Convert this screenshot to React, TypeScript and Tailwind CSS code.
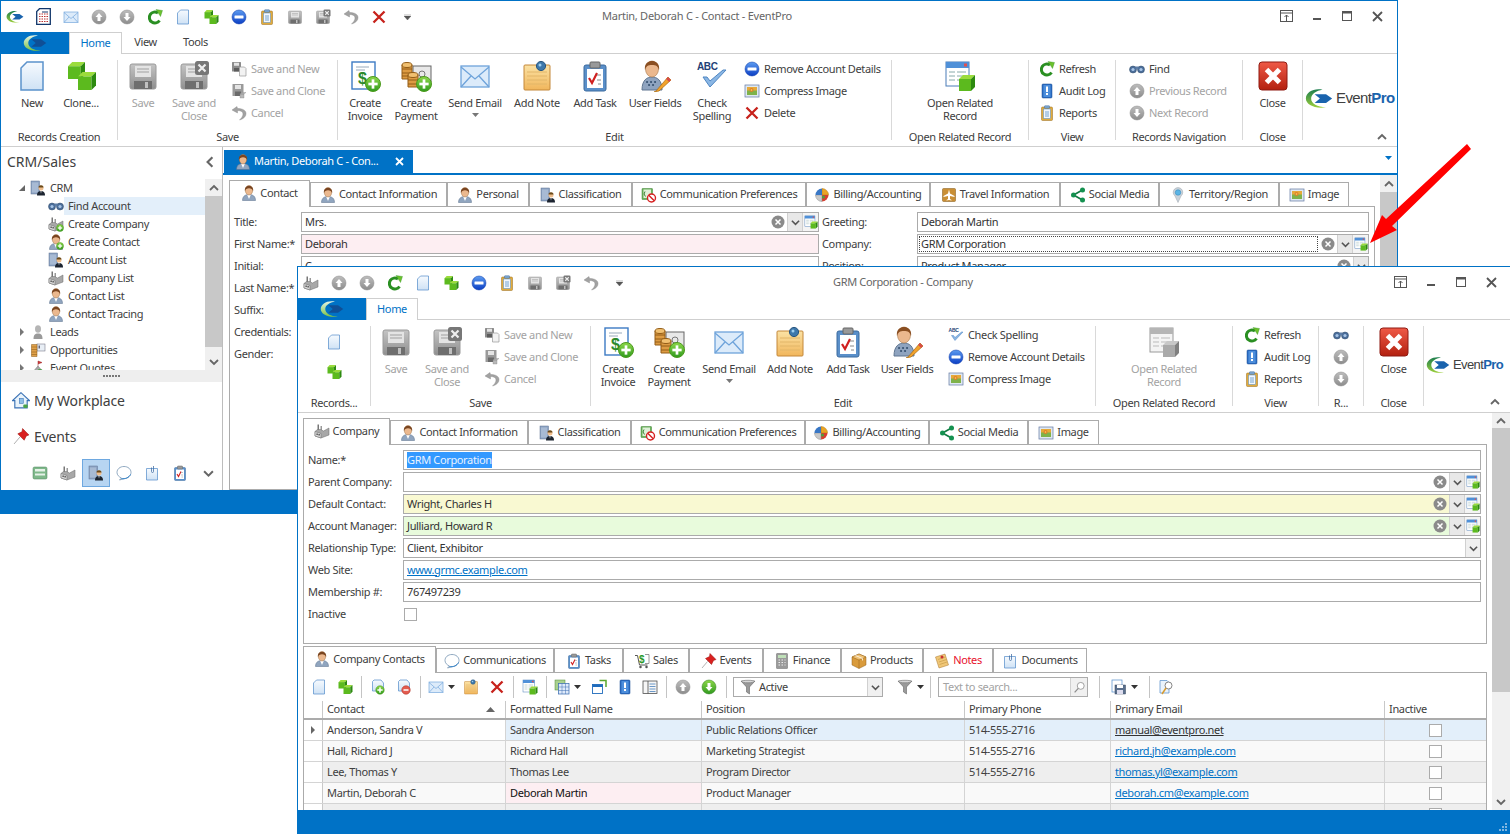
import React from "react";
import clsx from "clsx";

const cube = (x: number, y: number, s: number) => (
  <g>
    <path d={`M${x} ${y + s * 0.25}L${x + s * 0.25} ${y}H${x + s}L${x + s * 0.75} ${y + s * 0.25}Z`} fill="#9bdc3c" />
    <rect x={x} y={y + s * 0.25} width={s * 0.75} height={s * 0.75} fill="#5cba1e" />
    <path d={`M${x + s * 0.75} ${y + s * 0.25}L${x + s} ${y}V${y + s * 0.75}L${x + s * 0.75} ${y + s}Z`} fill="#2d8a10" />
  </g>
);
const plus = (cx = 23, cy = 23, r = 8) => (
  <g>
    <circle cx={cx} cy={cy} r={r} fill="url(#gGreen)" stroke="#4c9a1c" />
    <rect x={cx - r * 0.62} y={cy - r * 0.18} width={r * 1.24} height={r * 0.36} fill="#fff" />
    <rect x={cx - r * 0.18} y={cy - r * 0.62} width={r * 0.36} height={r * 1.24} fill="#fff" />
  </g>
);
const floppy = (
  <g>
    <rect x="3" y="4" width="26" height="25" rx="2" fill="url(#gFloppy)" stroke="#9a9a9a" />
    <rect x="8" y="6" width="16" height="11" fill="#e4e4e4" />
    <path d="M10 9h12M10 12h12" stroke="#a0a0a0" strokeWidth="1" />
    <rect x="7" y="21" width="18" height="8" fill="#6e6e6e" />
    <rect x="18" y="22" width="3" height="6" fill="#c0c0c0" />
  </g>
);
const person = (
  <g>
    <path d="M3 31C3 22 9 19 16 19C23 19 29 22 29 31Z" fill="#90a5bf" stroke="#566c88" />
    <path d="M12 19L16 28L20 19Z" fill="#fff" />
    <ellipse cx="16" cy="10.5" rx="7.5" ry="9.5" fill="#ebb88e" stroke="#8a5a2c" strokeWidth=".8" />
    <path d="M8 12C5 -2 27 -2 24 12C23 8 20 6.5 16 6.5C12 6.5 9 8 8 12Z" fill="#7a4520" />
  </g>
);
const factory = (
  <g>
    <rect x="7" y="3" width="3" height="11" fill="#777" />
    <rect x="13" y="6" width="3" height="8" fill="#999" />
    <path d="M2 17L7 13H13L19 16L30 10V24L14 30L2 26Z" fill="#a8a8a8" stroke="#6a6a6a" />
    <path d="M2 17L14 21V30L2 26Z" fill="#d6d6d6" stroke="#6a6a6a" />
    <rect x="5" y="21" width="2.5" height="3" fill="#444" />
    <rect x="9" y="22" width="2.5" height="3" fill="#444" />
  </g>
);
const bldg = (
  <g>
    <rect x="2" y="2" width="17" height="26" fill="#8ea5c5" stroke="#5c7191" />
    <path d="M6 5v20M10 5v20M14 5v20" stroke="#d8e2ef" strokeWidth="1.4" />
    <circle cx="22" cy="16" r="5" fill="#eebd8c" />
    <path d="M17 15C17 9 27 9 27 15Z" fill="#6a4a1a" />
    <path d="M14 31C14 24 18 22 22 22C26 22 30 24 30 31Z" fill="#1c2430" />
    <path d="M21 22L22 27L23 22Z" fill="#fff" />
  </g>
);
const docClip = (
  <g>
    <path d="M5 7H27V30H5Z" fill="url(#gDoc)" stroke="#5b92cc" strokeWidth="1.5" />
    <path d="M19 2V13Q19 15 17 15Q15 15 15 13V5" fill="none" stroke="#4470a5" strokeWidth="1.6" />
  </g>
);
const task = (
  <g>
    <rect x="5" y="5" width="22" height="26" rx="2" fill="#5a8fc9" stroke="#3a6a9e" />
    <rect x="8" y="9" width="16" height="19" fill="#fff" />
    <rect x="11" y="2" width="10" height="6" rx="1" fill="#999" stroke="#666" />
    <path d="M10 18L13 23L18 13" fill="none" stroke="#d02020" strokeWidth="2.2" />
    <path d="M18 20h4M19 24h3M18 15h4" stroke="#888" />
  </g>
);
const note = (
  <g>
    <rect x="3" y="5" width="26" height="25" rx="1" fill="url(#gNote)" stroke="#c4883a" />
    <path d="M6 12h20M6 16h20M6 20h20M6 24h20" stroke="#e2b669" />
    <circle cx="20" cy="6" r="4.6" fill="#3e78ab" stroke="#28567f" />
    <circle cx="19" cy="5" r="1.5" fill="#9fd0f0" />
  </g>
);
const clip = (
  <g>
    <rect x="5" y="4" width="22" height="27" rx="2" fill="#e0ab3c" stroke="#96691c" />
    <rect x="9" y="8" width="14" height="19" fill="#f4f7fb" stroke="#4a88c6" />
    <path d="M12 14h8M12 18h8M12 22h8" stroke="#4a88c6" strokeWidth="1.5" />
    <rect x="11" y="1.5" width="10" height="5" rx="1" fill="#7ea8d2" stroke="#446f9c" />
  </g>
);
const image = (
  <g>
    <rect x="2" y="4" width="28" height="24" fill="#dfe8f2" stroke="#6a7fa8" strokeWidth="1.5" />
    <rect x="6" y="8" width="20" height="16" fill="#7fb24a" />
    <path d="M6 8h20v7H6z" fill="#e6a93a" />
    <circle cx="15" cy="14" r="4" fill="#e07f2a" />
    <circle cx="15" cy="14" r="1.6" fill="#f7dd63" />
  </g>
);
const ball = (fill: string, st: string, inner: React.ReactNode) => (
  <g>
    <circle cx="16" cy="16" r="14" fill={fill} stroke={st} />
    {inner}
  </g>
);
const upArrow = <path d="M16 8L23 16H19V24H13V16H9Z" fill="#fff" />;
const downArrow = <path d="M16 24L23 16H19V8H13V16H9Z" fill="#fff" />;

const G: Record<string, React.ReactNode> = {
  doc: (
    <g>
      <path d="M11 2H27V30H5V8Z" fill="url(#gDoc)" stroke="#5b92cc" strokeWidth="1.5" />
    </g>
  ),
  clone: (
    <g>
      {cube(3, 2, 17)}
      {cube(13, 12, 18)}
    </g>
  ),
  minus: ball("url(#gBlue)", "#0a38a8", <rect x="7" y="13" width="18" height="6" rx="1" fill="#fff" />),
  clip,
  floppy,
  floppyX: (
    <g>
      {floppy}
      <rect x="17" y="1" width="14" height="14" rx="2.5" fill="#777" />
      <path d="M20.5 4.5L27.5 11.5M27.5 4.5L20.5 11.5" stroke="#eee" strokeWidth="2.2" />
    </g>
  ),
  saveNew: (
    <g>
      <rect x="2" y="2" width="18" height="19" rx="1" fill="#8c8c8c" />
      <rect x="6" y="3.5" width="10" height="6" fill="#e4e4e4" />
      <rect x="6" y="14" width="10" height="7" fill="#5c5c5c" />
      <path d="M17 12H27L30 15V30H17Z" fill="#f2f2f2" stroke="#9a9a9a" strokeWidth="1.4" />
    </g>
  ),
  saveClone: (
    <g>
      <rect x="3" y="2" width="22" height="24" rx="1" fill="#9a9a9a" />
      <rect x="8" y="4" width="12" height="8" fill="#e4e4e4" />
      <rect x="8" y="17" width="12" height="9" fill="#6a6a6a" />
      <path d="M18 22L22 19H30L26 22ZM18 22H26V30H18Z" fill="#b8b8b8" stroke="#888" strokeWidth=".7" />
    </g>
  ),
  undo: (
    <g>
      <path d="M12 3L2 10L13 16V11C20 11 24 14 24 18C24 23 20 27 17 30C25 28 30 23 30 17C30 10 22 7 13 7Z" fill="#a2a2a2" stroke="#7c7c7c" strokeWidth=".7" />
    </g>
  ),
  x: <path d="M5 5L27 27M27 5L5 27" stroke="#c7221c" strokeWidth="4.6" />,
  refresh: (
    <g>
      <path d="M25 23A11 11 0 1 1 22 8" fill="none" stroke="#2a8f22" strokeWidth="6" />
      <path d="M18 1L31 3L27 15Z" fill="#6cc02d" stroke="#2a8f22" strokeWidth=".7" />
    </g>
  ),
  mail: (
    <g>
      <rect x="2" y="6" width="28" height="21" fill="#dcebfa" stroke="#6ea3da" strokeWidth="1.3" />
      <path d="M2 7L16 19L30 7M2 27L12 16M30 27L20 16" fill="none" stroke="#6ea3da" strokeWidth="1.3" />
    </g>
  ),
  grayUp: ball("url(#gGray)", "#8a8a8a", upArrow),
  grayDown: ball("url(#gGray)", "#8a8a8a", downArrow),
  greenDown: ball("url(#gGreen)", "#2d7a18", downArrow),
  person,
  factory,
  bldg,
  note,
  task,
  user: (
    <g>
      <path d="M3 30C3 20 8 17 13 17C18 17 23 20 23 30Z" fill="#8ea3bf" stroke="#5f7590" />
      <ellipse cx="13" cy="9" rx="6.5" ry="8" fill="#ebb88e" stroke="#a87748" strokeWidth=".6" />
      <path d="M6 10C4 -2 22 -2 20 10C19 6 17 5 13 5C9 5 7 6 6 10Z" fill="#8a4f22" />
      <path d="M8 22h.1M12 22h.1M16 22h.1M10 25h.1M14 25h.1" stroke="#36506f" strokeWidth="2" strokeLinecap="round" />
      <path d="M17 31L29 17L32 20L20 31L15 32Z" fill="#f2a22c" stroke="#a96a10" strokeWidth=".7" />
      <path d="M28 18L31 21" stroke="#d84a4a" strokeWidth="2.5" />
    </g>
  ),
  check: (
    <g>
      <text x="1" y="10" fontSize="10" fontWeight="700" fill="#1f3f77" fontFamily="Liberation Sans, sans-serif">ABC</text>
      <path d="M7 17L14 27L30 10L27 10L14 21L11 17Z" fill="#8ab6e4" stroke="#4f86c2" />
    </g>
  ),
  image,
  invoice: (
    <g>
      <rect x="3" y="2" width="23" height="27" fill="#fff" stroke="#3d7bc4" strokeWidth="1.4" />
      <path d="M7 7h13M7 10h9" stroke="#9ab" />
      <text x="9" y="24" fontSize="16" fontWeight="700" fill="#2b8a2b" fontFamily="Liberation Sans, sans-serif">$</text>
      {plus(24, 24, 7.5)}
    </g>
  ),
  payment: (
    <g>
      <rect x="13" y="6" width="18" height="16" fill="#e8e8e8" stroke="#666" />
      <circle cx="22" cy="14" r="3" fill="none" stroke="#777" />
      <path d="M2 5h10v14H2z" fill="#dd9b42" stroke="#935c16" />
      <ellipse cx="7" cy="5" rx="5" ry="2.5" fill="#f1c070" stroke="#935c16" />
      <path d="M2 9h10M2 13h10M2 16h10" stroke="#935c16" />
      <path d="M8 15h10v12H8z" fill="#dd9b42" stroke="#935c16" />
      <ellipse cx="13" cy="15" rx="5" ry="2.5" fill="#f1c070" stroke="#935c16" />
      <path d="M8 20h10M8 24h10" stroke="#935c16" />
      {plus(24, 24, 7.5)}
    </g>
  ),
  related: (
    <g>
      <rect x="2" y="2" width="23" height="24" fill="#fff" stroke="#4a7cb8" />
      <rect x="2" y="2" width="23" height="6" fill="#4f90d8" />
      <rect x="20" y="3.5" width="3" height="3" fill="#e05050" />
      <path d="M5 12h6M13 12h9M5 16h6M13 16h9M5 20h6M13 20h6" stroke="#8aa" />
      {cube(15, 15, 16)}
    </g>
  ),
  relatedGray: (
    <g>
      <rect x="2" y="2" width="23" height="24" fill="#f4f4f4" stroke="#9a9a9a" />
      <rect x="2" y="2" width="23" height="6" fill="#b5b5b5" />
      <path d="M5 12h6M13 12h9M5 16h6M13 16h9M5 20h6M13 20h6" stroke="#bbb" />
      <path d="M15 19L19 15H31L27 19Z" fill="#c8c8c8" />
      <rect x="15" y="19" width="12" height="12" fill="#aaa" />
      <path d="M27 19L31 15V27L27 31Z" fill="#808080" />
    </g>
  ),
  audit: (
    <g>
      <rect x="6" y="2" width="20" height="28" rx="2" fill="#2c6ec4" stroke="#174a90" />
      <rect x="9" y="4" width="14" height="24" rx="1" fill="#4d8edb" />
      <rect x="14" y="7" width="4" height="11" fill="#fff" />
      <rect x="14" y="20" width="4" height="4" fill="#fff" />
    </g>
  ),
  bino: (
    <g>
      <circle cx="8" cy="17" r="7" fill="#4a6d9a" stroke="#2f4866" />
      <circle cx="24" cy="17" r="7" fill="#4a6d9a" stroke="#2f4866" />
      <circle cx="8" cy="17" r="3.2" fill="#a8c5e6" />
      <circle cx="24" cy="17" r="3.2" fill="#a8c5e6" />
      <rect x="13" y="11" width="6" height="5" fill="#5d7ea8" />
    </g>
  ),
  closeBig: (
    <g>
      <rect x="2" y="2" width="28" height="28" rx="3" fill="url(#gRed)" stroke="#8f1b12" />
      <path d="M9.5 9.5L22.5 22.5M22.5 9.5L9.5 22.5" stroke="#fff" strokeWidth="5" />
    </g>
  ),
  comm: (
    <g>
      <rect x="2" y="3" width="21" height="22" rx="1" fill="#69b35a" stroke="#3e7f35" />
      <rect x="5" y="5" width="15" height="17" fill="#dff0d8" />
      <path d="M8 9L6 14L9 19" fill="none" stroke="#3e7f35" strokeWidth="2" />
      <circle cx="21" cy="22" r="8" fill="#fff" stroke="#d62020" strokeWidth="2.8" />
      <path d="M15.5 16.5L26.5 27.5" stroke="#d62020" strokeWidth="2.8" />
    </g>
  ),
  billing: (
    <g>
      <path d="M16 3A13 13 0 0 1 29 16L16 16Z" fill="#e9a425" stroke="#b77a12" />
      <path d="M29 16A13 13 0 0 1 16 29L16 16Z" fill="#d63f2f" />
      <path d="M16 29A13 13 0 0 1 3 16L16 16Z" fill="#c9c9c9" stroke="#888" />
      <path d="M3 16A13 13 0 0 1 16 3L16 16Z" fill="#3977c5" />
      <circle cx="19" cy="20" r="3" fill="#4da13a" />
    </g>
  ),
  travel: (
    <g>
      <rect x="3" y="3" width="26" height="26" rx="2" fill="#c98f35" stroke="#805515" />
      <path d="M16 5L18 13L27 18V20L18 18V24L21 26V27L16 26L11 27V26L14 24V18L5 20V18L14 13Z" fill="#fff" />
    </g>
  ),
  share: (
    <g>
      <path d="M25 6L7 16L25 26" fill="none" stroke="#137a43" strokeWidth="3.4" />
      <circle cx="25" cy="6" r="5" fill="#159150" />
      <circle cx="7" cy="16" r="5" fill="#159150" />
      <circle cx="25" cy="26" r="5" fill="#159150" />
    </g>
  ),
  pinMap: (
    <g>
      <path d="M16 31L10 18A9.5 9.5 0 1 1 22 18Z" fill="#c9d2da" stroke="#9aa3ab" />
      <circle cx="16" cy="11" r="5.5" fill="#5ab4e5" stroke="#2f85b9" />
    </g>
  ),
  home: (
    <g>
      <path d="M16 3L1 17H5V30H27V17H31Z" fill="#e9f3fb" stroke="#3a72b5" strokeWidth="2" />
      <rect x="13" y="13" width="7" height="9" fill="#8fbfe8" stroke="#3a72b5" />
      <rect x="20" y="24" width="8" height="6" rx="2" fill="#4aa24a" />
    </g>
  ),
  pushpin: (
    <g>
      <path d="M2 30L13 17" stroke="#9a9a9a" strokeWidth="1.5" />
      <path d="M18 1L30 13L25 15L21 23L9 11L17 7Z" fill="#d9201f" stroke="#971310" />
    </g>
  ),
  cash: (
    <g>
      <rect x="2" y="4" width="28" height="24" rx="3" fill="#7fb88a" stroke="#4a8358" />
      <rect x="6" y="8" width="20" height="5" fill="#e6f2e8" />
      <rect x="6" y="17" width="20" height="4" fill="#e6f2e8" />
    </g>
  ),
  bubble: (
    <g>
      <path d="M16 3C8 3 2 8 2 15C2 20 6 24 11 26L7 30L17 27C24 27 30 21 30 15C30 8 24 3 16 3Z" fill="#fff" stroke="#6f8fae" strokeWidth="1.5" />
      <path d="M11 27C18 29 26 25 29 19" fill="none" stroke="#2d7fc8" strokeWidth="2" />
    </g>
  ),
  docClip,
  calc: (
    <g>
      <rect x="5" y="1" width="22" height="30" rx="1" fill="#9a9a9a" stroke="#6a6a6a" />
      <rect x="8" y="4" width="16" height="6" fill="#bfe0b8" />
      <path d="M9 14h3M15 14h3M21 14h2M9 19h3M15 19h3M21 19h2M9 24h3M15 24h3M21 24h2" stroke="#eee" strokeWidth="2.4" />
    </g>
  ),
  box: (
    <g>
      <path d="M16 2L30 8V24L16 31L2 24V8Z" fill="#d99b3c" stroke="#94621a" />
      <path d="M2 8L16 14L30 8L16 2Z" fill="#f0c377" stroke="#94621a" />
      <path d="M16 14V31" stroke="#94621a" />
      <path d="M9 5L23 11V15" fill="none" stroke="#fff" strokeWidth="1.5" />
    </g>
  ),
  noteTan: (
    <g>
      <path d="M3 8L22 2L29 24L10 30Z" fill="#f0c777" stroke="#a9752a" />
      <path d="M8 13L23 8M10 18L25 13M11 23L26 18" stroke="#b98a3a" />
      <circle cx="16" cy="8" r="3" fill="#c93232" />
    </g>
  ),
  cart: (
    <g>
      <path d="M2 5H7L11 24H27" fill="none" stroke="#555" strokeWidth="2" />
      <circle cx="13" cy="28" r="2.5" fill="#555" />
      <circle cx="25" cy="28" r="2.5" fill="#555" />
      <text x="10" y="19" fontSize="20" fontWeight="700" fill="#2a9a2a" fontFamily="Liberation Sans, sans-serif">$</text>
      <path d="M22 3h8v18h-8" fill="none" stroke="#777" strokeWidth="1.5" />
    </g>
  ),
  funnel: (
    <g>
      <path d="M2 4H30L19 16V30L13 26V16Z" fill="#9a9a9a" stroke="#555" />
      <ellipse cx="16" cy="5" rx="13" ry="2.5" fill="#d8d8d8" stroke="#666" />
    </g>
  ),
  glass: (
    <g>
      <circle cx="19" cy="12" r="8.5" fill="#fff" stroke="#8c8c8c" strokeWidth="2" />
      <path d="M13 18L4 28" stroke="#8c8c8c" strokeWidth="3" />
    </g>
  ),
  addDoc: (
    <g>
      <path d="M8 2H22L27 8V24H5V5Z" fill="url(#gDoc)" stroke="#5b92cc" strokeWidth="1.5" />
      {plus(20, 22, 8.5)}
    </g>
  ),
  remDoc: (
    <g>
      <path d="M8 2H22L27 8V24H5V5Z" fill="url(#gDoc)" stroke="#5b92cc" strokeWidth="1.5" />
      <circle cx="20" cy="22" r="8.5" fill="#e35c50" stroke="#a8261a" />
      <rect x="15" y="20.5" width="10" height="3" fill="#fff" />
    </g>
  ),
  gridSel: (
    <g>
      <rect x="2" y="2" width="20" height="20" fill="#a9d18e" stroke="#4f8a35" />
      <rect x="9" y="9" width="21" height="21" fill="#dfeafa" stroke="#3c6eb2" strokeWidth="1.5" />
      <path d="M9 16h21M9 23h21M16 9v21M23 9v21" stroke="#3c6eb2" />
    </g>
  ),
  windows: (
    <g>
      <rect x="3" y="11" width="20" height="18" fill="#fff" stroke="#1f6cbc" strokeWidth="1.8" />
      <rect x="3" y="11" width="20" height="5" fill="#1f6cbc" />
      <path d="M17 3H30V16" fill="none" stroke="#5aa82e" strokeWidth="3" />
    </g>
  ),
  layout: (
    <g>
      <rect x="2" y="4" width="28" height="25" fill="#f6f6f6" stroke="#444" strokeWidth="1.5" />
      <path d="M12 4V29" stroke="#444" strokeWidth="1.5" />
      <path d="M15 10h12M15 15h12M15 20h12M15 25h12" stroke="#3c78b8" strokeWidth="1.5" />
    </g>
  ),
  saveLayout: (
    <g>
      <rect x="2" y="2" width="20" height="24" fill="#fff" stroke="#5b92cc" strokeWidth="1.5" />
      <rect x="8" y="12" width="21" height="18" fill="#5a6f8c" stroke="#35465e" />
      <rect x="12" y="12" width="12" height="6" fill="#fff" />
      <rect x="12" y="22" width="12" height="8" fill="#dde" />
    </g>
  ),
  docSearch: (
    <g>
      <path d="M4 3H18L22 7V28H4Z" fill="#eaf3fb" stroke="#5b92cc" strokeWidth="1.5" />
      <circle cx="21" cy="13" r="7" fill="#fff" stroke="#777" strokeWidth="1.8" />
      <path d="M16 18L8 30" stroke="#d89b2e" strokeWidth="3" />
    </g>
  ),
  addCo: (
    <g>
      {factory}
      {plus(24, 24, 7)}
    </g>
  ),
  addPerson: (
    <g>
      {person}
      {plus(24, 24, 7)}
    </g>
  ),
  lead: (
    <g>
      <path d="M7 30C7 22 10 19 16 19C22 19 25 22 25 30Z" fill="#9a9a9a" />
      <ellipse cx="16" cy="10" rx="6" ry="7.5" fill="#b5b5b5" />
    </g>
  ),
  opp: (
    <g>
      <rect x="14" y="4" width="16" height="14" fill="#e8eef5" stroke="#667" />
      <rect x="17" y="7" width="3" height="6" fill="#667" />
      <path d="M3 5h11v24H3z" fill="#e0a14a" stroke="#8a5a16" />
      <path d="M3 10h11M3 15h11M3 20h11M3 25h11" stroke="#8a5a16" />
    </g>
  ),
  quote: (
    <g>
      <path d="M4 26L16 12L28 26Z" fill="#a8a8a8" stroke="#666" />
      <path d="M16 12V2L24 5L16 8" fill="#d13b3b" stroke="#922" />
      <circle cx="20" cy="24" r="6" fill="#4aa24a" />
    </g>
  ),
};

function Ic({ n, s = 16 }: { n: string; s?: number }) {
  return (
    <svg width={s} height={s} viewBox="0 0 32 32" className="shrink-0">
      {G[n]}
    </svg>
  );
}

function Logo({ w, onBlue }: { w: number; onBlue?: boolean }) {
  return (
    <svg width={w} height={(w * 24) / 32} viewBox="0 0 32 24" className="shrink-0">
      <path d="M20 2C10 0 1 5 1 12C1 19 11 24 24 22C14 22 7 18 7 12C7 7 13 3 20 2Z" fill={onBlue ? "url(#gLogoB)" : "url(#gLogo)"} />
      <path d="M11 7H24L31 12L24 17H11L17 12Z" fill={onBlue ? "#0f4f96" : "#1a63ad"} />
    </svg>
  );
}

function Chev({ d, c = "#666", s = 10, w = 1.8 }: { d: "u" | "d" | "l" | "r"; c?: string; s?: number; w?: number }) {
  const p = { u: "M1 7L5 3L9 7", d: "M1 3L5 7L9 3", l: "M7 1L3 5L7 9", r: "M3 1L7 5L3 9" }[d];
  return (
    <svg width={s} height={s} viewBox="0 0 10 10" className="shrink-0">
      <path d={p} fill="none" stroke={c} strokeWidth={w} />
    </svg>
  );
}
const Caret = ({ c = "#404040" }: { c?: string }) => (
  <svg width="7" height="4" viewBox="0 0 7 4" className="shrink-0">
    <path d="M0 0H7L3.5 4Z" fill={c} />
  </svg>
);

function Large({ w, n, label, off, caret }: { w: string; n: string; label: React.ReactNode; off?: boolean; caret?: boolean }) {
  return (
    <div className={clsx("flex flex-col items-center shrink-0", w, off ? "text-[#a3a3a3]" : "text-[#404040]")}>
      <Ic n={n} s={32} />
      <div className="mt-[4px] text-center leading-[13px] whitespace-nowrap">{label}</div>
      {caret && (
        <div className="mt-[4px]">
          <Caret c="#777" />
        </div>
      )}
    </div>
  );
}
function Small({ n, label, off }: { n: string; label?: string; off?: boolean }) {
  return (
    <div className={clsx("flex items-center gap-[4px] h-[22px] whitespace-nowrap", off ? "text-[#a3a3a3]" : "text-[#404040]")}>
      <Ic n={n} s={16} />
      {label && <span>{label}</span>}
    </div>
  );
}
function Col({ className, children }: { className: string; children: React.ReactNode }) {
  return <div className={clsx("flex flex-col -mt-[2px] shrink-0", className)}>{children}</div>;
}
function Group({ w, label, children, end }: { w: string; label: string; children: React.ReactNode; end?: boolean }) {
  return (
    <div className={clsx("flex flex-col h-[80px] shrink-0", w, !end && "border-r border-[#d9d9d9]")}>
      <div className="flex h-[70px] shrink-0">{children}</div>
      <div className="h-[14px] leading-[14px] text-center text-[#404040] whitespace-nowrap shrink-0">{label}</div>
    </div>
  );
}

function Controls({ cls }: { cls: string }) {
  const Cell = ({ children }: { children: React.ReactNode }) => <div className="w-[30px] flex justify-center items-center">{children}</div>;
  return (
    <div className={clsx("ml-auto flex items-center", cls)}>
      <Cell>
        <svg width="14" height="13" viewBox="0 0 14 13">
          <rect x=".5" y=".5" width="12" height="11" fill="none" stroke="#555" />
          <path d="M.5 3H12.5" stroke="#555" />
          <path d="M6.5 11V5M4.5 7L6.5 5L8.5 7" fill="none" stroke="#555" />
        </svg>
      </Cell>
      <Cell>
        <svg width="10" height="10" viewBox="0 0 10 10">
          <rect x="1" y="6" width="8" height="2" fill="#555" />
        </svg>
      </Cell>
      <Cell>
        <svg width="11" height="11" viewBox="0 0 11 11">
          <rect x=".5" y=".5" width="9" height="9" fill="none" stroke="#555" />
          <rect x="0" y="0" width="10" height="2.5" fill="#555" />
        </svg>
      </Cell>
      <Cell>
        <svg width="11" height="11" viewBox="0 0 11 11">
          <path d="M1 1L10 10M10 1L1 10" stroke="#555" strokeWidth="1.8" />
        </svg>
      </Cell>
    </div>
  );
}

function Qat({ items, ml }: { items: React.ReactNode[]; ml?: string }) {
  return (
    <div className={clsx("flex items-center", ml)}>
      {items.map((it, i) => (
        <div key={i} className="w-[28px] flex justify-center items-center">
          {it}
        </div>
      ))}
    </div>
  );
}

function Tab({ n, label, active, w, red }: { n: string; label: string; active?: boolean; w: string; red?: boolean }) {
  return (
    <div
      className={clsx(
        "flex items-center justify-center gap-[3px] border border-b-0 border-[#ababab] bg-white whitespace-nowrap shrink-0",
        w,
        active ? "h-[27px] -mb-px relative z-10 pb-[2px]" : "h-[24px]",
        red ? "text-[#e8112d]" : "text-[#404040]"
      )}
    >
      <Ic n={n} s={16} />
      <span>{label}</span>
    </div>
  );
}

function Clear() {
  return (
    <svg width="14" height="14" viewBox="0 0 14 14" className="shrink-0">
      <circle cx="7" cy="7" r="6.5" fill="#8a8a8a" />
      <path d="M4.5 4.5L9.5 9.5M9.5 4.5L4.5 9.5" stroke="#fff" strokeWidth="1.5" />
    </svg>
  );
}
function Look() {
  return (
    <svg width="14" height="14" viewBox="0 0 32 32" className="shrink-0">
      {G.related}
    </svg>
  );
}
function Field({ v, bg, combo, drop, dotted, w, sel, link, noLook }: { v?: string; bg?: string; combo?: boolean; drop?: boolean; dotted?: boolean; w?: string; sel?: boolean; link?: boolean; noLook?: boolean }) {
  return (
    <div className={clsx("h-[20px] border border-[#ababab] flex items-center shrink-0", bg ?? "bg-white", w ?? "flex-1")}>
      <div className={clsx("flex-1 min-w-0 h-full flex items-center pl-[3px] overflow-hidden whitespace-nowrap text-[#333]", dotted && "outline outline-1 outline-dotted outline-[#444] -outline-offset-[2px]")}>
        {sel ? <span className="bg-[#3399ff] text-[#e8f2ff]">{v}</span> : link ? <span className="text-[#0072c6] underline">{v}</span> : v}
      </div>
      {combo && (
        <>
          <div className="ml-[2px] mr-[2px]">
            <Clear />
          </div>
          <div className="w-[15px] h-full bg-[#e8e8e8] border-l border-[#d0d0d0] flex items-center justify-center">
            <Chev d="d" s={9} c="#555" />
          </div>
          {!noLook && (
            <div className="w-[16px] h-full flex items-center justify-center border-l border-[#d0d0d0] bg-[#f4f4f4]">
              <Look />
            </div>
          )}
        </>
      )}
      {drop && (
        <div className="w-[15px] h-full bg-[#f0f0f0] border-l border-[#d0d0d0] flex items-center justify-center">
          <Chev d="d" s={9} c="#555" />
        </div>
      )}
    </div>
  );
}

function Scroll({ className, up, thumb, rest, down }: { className?: string; up: string; thumb: string; rest: string; down?: boolean }) {
  return (
    <div className={clsx("flex flex-col shrink-0 bg-[#f0f0f0]", className)}>
      <div className={clsx("flex items-center justify-center shrink-0", up)}>
        <Chev d="u" />
      </div>
      <div className={clsx("bg-[#c8c8c8] shrink-0", thumb)} />
      <div className={clsx("flex items-end justify-center shrink-0", rest)}>
        {down && (
          <div className="pb-[3px]">
            <Chev d="d" />
          </div>
        )}
      </div>
    </div>
  );
}

function Sep({ c }: { c: string }) {
  return <div className={clsx("w-px h-[22px] bg-[#c4c4c4] shrink-0", c)} />;
}
function TB({ w, n, caret, s = 16 }: { w: string; n: string; caret?: boolean; s?: number }) {
  return (
    <div className={clsx("flex items-center justify-center gap-[4px] shrink-0", w)}>
      <Ic n={n} s={s} />
      {caret && <Caret c="#333" />}
    </div>
  );
}

const gridCols = ["w-[19px]", "w-[183px]", "w-[196px]", "w-[263px]", "w-[146px]", "w-[274px]", "flex-1"];
const people = [
  { c: "Anderson, Sandra V", f: "Sandra Anderson", p: "Public Relations Officer", ph: "514-555-2716", e: "manual@eventpro.net", bg: "bg-[#e3effa]" },
  { c: "Hall, Richard J", f: "Richard Hall", p: "Marketing Strategist", ph: "514-555-2716", e: "richard.jh@example.com", bg: "bg-[#f9f9f9]" },
  { c: "Lee, Thomas Y", f: "Thomas Lee", p: "Program Director", ph: "514-555-2716", e: "thomas.yl@example.com", bg: "bg-[#eeeeee]" },
  { c: "Martin, Deborah C", f: "Deborah Martin", p: "Product Manager", ph: "", e: "deborah.cm@example.com", bg: "bg-[#f9f9f9]" },
  { c: "Nolan, Peter K", f: "Peter Nolan", p: "Sales Lead", ph: "", e: "peter.kn@example.com", bg: "bg-[#eeeeee]" },
];

function Defs() {
  const g = (id: string, a: string, b: string) => (
    <linearGradient id={id} x1="0" y1="0" x2="0" y2="1">
      <stop offset="0" stopColor={a} />
      <stop offset="1" stopColor={b} />
    </linearGradient>
  );
  return (
    <svg width="0" height="0" className="absolute">
      <defs>
        {g("gDoc", "#f6fafe", "#cfe2f5")}
        {g("gBlue", "#5d9cf0", "#0b3ec4")}
        {g("gGreen", "#8ed84a", "#2f9a1e")}
        {g("gGray", "#bdbdbd", "#8c8c8c")}
        {g("gRed", "#ef5a47", "#b3200f")}
        {g("gNote", "#fbe2a4", "#f1b65c")}
        {g("gFloppy", "#c4c4c4", "#8f8f8f")}
        {g("gLogo", "#1c7d4e", "#9ccf3c")}
        {g("gLogoB", "#e6f4e6", "#7ac143")}
      </defs>
    </svg>
  );
}

const Two = ({ a, b }: { a: string; b: string }) => (
  <>
    {a}
    <br />
    {b}
  </>
);

function BrandLogo({ cls, lw, text, gap }: { cls: string; lw: number; text: string; gap: string }) {
  return (
    <div className={clsx("flex items-center shrink-0 font-['Liberation_Sans',sans-serif]", cls, gap)}>
      <Logo w={lw} />
      <span className={clsx("tracking-[-0.6px] text-[#404040] whitespace-nowrap", text)}>
        Event<span className="text-[#1a63ad] font-bold">Pro</span>
      </span>
    </div>
  );
}

function Ribbon({ tree }: { tree: React.ReactNode }) {
  return <div className="flex h-[93px] pt-[6px] border-b border-[#cfcfcf] shrink-0 relative">{tree}</div>;
}

function Window1() {
  const labels: [string, string?][] = [["Title:"], ["First Name:", "*"], ["Initial:"], ["Last Name:", "*"], ["Suffix:"], ["Credentials:"], ["Gender:"]];
  const right = [
    <Field key="a" v="Deborah Martin" />,
    <Field key="b" v="GRM Corporation" combo dotted />,
    <Field key="c" v="Product Manager" combo noLook />,
  ];
  const left = [<Field key="a" v="Mrs." combo />, <Field key="b" v="Deborah" bg="bg-[#fdeef2]" />, <Field key="c" v="C" />, <Field key="d" v="Martin" bg="bg-[#fdeef2]" />, <Field key="e" />, <Field key="f" />, <Field key="g" />];
  return (
    <div className="absolute left-0 top-0 w-[1398px] h-[514px] bg-white border border-b-0 border-[#0072c6] flex flex-col overflow-hidden">
      <div className="flex items-center h-[31px] shrink-0">
        <Qat
          items={[
            <Logo w={18} key="1" />,
            <svg key="2" width="15" height="17" viewBox="0 0 15 17">
              <path d="M3.5 .7H14.3V16.3H.7V3.5Z" fill="#fff" stroke="#12376b" strokeWidth="1.3" />
              <path d="M3 6h9M3 8.5h9M3 11h9M3 13.5h9" stroke="#b33" strokeDasharray="1.5 1" />
              <path d="M6 4h6" stroke="#12376b" />
            </svg>,
            <Ic n="mail" key="3" />,
            <Ic n="grayUp" key="4" />,
            <Ic n="grayDown" key="5" />,
            <Ic n="refresh" key="6" />,
            <Ic n="doc" key="7" />,
            <Ic n="clone" key="8" />,
            <Ic n="minus" key="9" />,
            <Ic n="clip" key="10" />,
            <Ic n="floppy" key="11" />,
            <Ic n="floppyX" key="12" />,
            <Ic n="undo" key="13" />,
            <Ic n="x" key="14" />,
            <svg key="15" width="7" height="6" viewBox="0 0 7 6">
              <path d="M0 0H7M0 2H7L3.5 6Z" fill="#555" stroke="#555" strokeWidth=".4" />
            </svg>,
          ]}
        />
        <div className="ml-[181px] text-[#666] whitespace-nowrap tracking-[-0.25px]">Martin, Deborah C - Contact - EventPro</div>
        <Controls cls="pr-[5px]" />
      </div>
      <div className="flex h-[22px] shrink-0 border-b border-[#cfcfcf]">
        <div className="w-[68px] h-[22px] bg-[#0072c6] flex items-center justify-center shrink-0">
          <Logo w={24} onBlue />
        </div>
        <div className="w-[53px] h-[22px] bg-white border border-b-0 border-[#cfcfcf] text-[#0072c6] flex items-center justify-center">Home</div>
        <div className="w-[47px] flex items-center justify-center text-[#404040]">View</div>
        <div className="w-[53px] flex items-center justify-center text-[#404040]">Tools</div>
      </div>
      <Ribbon
        tree={
          <>
            <Group w="w-[117px]" label="Records Creation">
              <Large w="w-[50px] ml-[6px]" n="doc" label="New" />
              <Large w="w-[48px]" n="clone" label="Clone..." />
            </Group>
            <Group w="w-[220px]" label="Save">
              <Large w="w-[50px]" n="floppy" label="Save" off />
              <Large w="w-[52px]" n="floppyX" label={<Two a="Save and" b="Close" />} off />
              <Col className="ml-[11px]">
                <Small n="saveNew" label="Save and New" off />
                <Small n="saveClone" label="Save and Clone" off />
                <Small n="undo" label="Cancel" off />
              </Col>
            </Group>
            <Group w="w-[554px]" label="Edit">
              <Large w="w-[54px]" n="invoice" label={<Two a="Create" b="Invoice" />} />
              <Large w="w-[48px]" n="payment" label={<Two a="Create" b="Payment" />} />
              <Large w="w-[70px]" n="mail" label="Send Email" caret />
              <Large w="w-[54px]" n="note" label="Add Note" />
              <Large w="w-[62px]" n="task" label="Add Task" />
              <Large w="w-[58px]" n="user" label="User Fields" />
              <Large w="w-[56px]" n="check" label={<Two a="Check" b="Spelling" />} />
              <Col className="ml-[4px]">
                <Small n="minus" label="Remove Account Details" />
                <Small n="image" label="Compress Image" />
                <Small n="x" label="Delete" />
              </Col>
            </Group>
            <Group w="w-[137px]" label="Open Related Record">
              <Large w="w-full" n="related" label={<Two a="Open Related" b="Record" />} />
            </Group>
            <Group w="w-[87px]" label="View">
              <Col className="ml-[10px]">
                <Small n="refresh" label="Refresh" />
                <Small n="audit" label="Audit Log" />
                <Small n="clip" label="Reports" />
              </Col>
            </Group>
            <Group w="w-[127px]" label="Records Navigation">
              <Col className="ml-[13px]">
                <Small n="bino" label="Find" />
                <Small n="grayUp" label="Previous Record" off />
                <Small n="grayDown" label="Next Record" off />
              </Col>
            </Group>
            <Group w="w-[60px]" label="Close">
              <Large w="w-full" n="closeBig" label="Close" />
            </Group>
            <div className="flex flex-col flex-1 items-start">
              <BrandLogo cls="mt-[27px] ml-[2px]" lw={28} text="text-[15px]" gap="gap-[3px]" />
              <div className="mt-[22px] ml-[74px]">
                <Chev d="u" s={10} />
              </div>
            </div>
          </>
        }
      />
      <div className="flex flex-1 min-h-0">
        <div className="w-[222px] border-r border-[#bdbdbd] flex flex-col shrink-0">
          <div className="h-[32px] flex items-center justify-between pl-[6px] pr-[6px] pb-[3px] text-[14px] text-[#404040] shrink-0 tracking-normal">
            <span>CRM/Sales</span>
            <Chev d="l" s={12} c="#666" w={1.8} />
          </div>
          <div className="flex h-[191px] shrink-0 overflow-hidden">
            <div className="flex-1 text-[#404040]">
              <div className="h-[18px] flex items-center pl-[17px] gap-[4px]">
                <svg width="8" height="8" viewBox="0 0 8 8" className="shrink-0">
                  <path d="M7 1V7H1Z" fill="#666" />
                </svg>
                <Ic n="bldg" s={16} />
                <span>CRM</span>
              </div>
              {[
                ["bino", "Find Account"],
                ["addCo", "Create Company"],
                ["addPerson", "Create Contact"],
                ["bldg", "Account List"],
                ["factory", "Company List"],
                ["person", "Contact List"],
                ["person", "Contact Tracing"],
              ].map(([n, l], i) => (
                <div key={l} className="h-[18px] flex items-center pl-[47px]">
                  <Ic n={n} s={16} />
                  <span className={clsx("flex-1 h-full flex items-center pl-[4px]", i === 0 && "bg-[#e3effa]")}>{l}</span>
                </div>
              ))}
              {[
                ["lead", "Leads"],
                ["opp", "Opportunities"],
                ["quote", "Event Quotes"],
              ].map(([n, l]) => (
                <div key={l} className="h-[18px] flex items-center pl-[17px] gap-[4px]">
                  <svg width="8" height="8" viewBox="0 0 8 8" className="shrink-0">
                    <path d="M2 0L6 4L2 8Z" fill="#777" />
                  </svg>
                  <Ic n={n} s={16} />
                  <span>{l}</span>
                </div>
              ))}
            </div>
            <Scroll className="w-[17px]" up="h-[17px]" thumb="h-[151px]" rest="h-[23px]" down />
          </div>
          <div className="h-[12px] bg-[#eeeeee] flex items-center justify-center shrink-0">
            <span className="flex gap-[1px]">
              {[0, 1, 2, 3, 4, 5].map((i) => (
                <span key={i} className="w-[2px] h-[2px] bg-[#777]" />
              ))}
            </span>
          </div>
          <div className="h-[36px] flex items-center pl-[11px] gap-[4px] text-[14px] text-[#404040] shrink-0 tracking-[-0.15px]">
            <Ic n="home" s={18} />
            <span>My Workplace</span>
          </div>
          <div className="h-[36px] flex items-center pl-[12px] gap-[4px] text-[14px] text-[#404040] shrink-0 tracking-[-0.15px]">
            <Ic n="pushpin" s={17} />
            <span>Events</span>
          </div>
          <div className="flex pl-[25px] pt-[5px]">
            {["cash", "factory", "bldg", "bubble", "docClip", "task"].map((n, i) => (
              <div key={n} className={clsx("w-[28px] h-[28px] flex items-center justify-center shrink-0", i === 2 && "bg-[#b7d5f2] border border-[#6ea8e0]")}>
                <Ic n={n} s={16} />
              </div>
            ))}
            <div className="w-[28px] h-[28px] flex items-center justify-center">
              <Chev d="d" s={11} />
            </div>
          </div>
        </div>
        <div className="flex-1 flex flex-col min-w-0">
          <div className="h-[28px] pt-[3px] border-b-2 border-[#0072c6] flex justify-between shrink-0">
            <div className="w-[189px] h-[23px] ml-px bg-[#0072c6] text-white flex items-center pl-[11px] gap-[3px] whitespace-nowrap">
              <Ic n="person" s={16} />
              <span className="flex-1">Martin, Deborah C - Con...</span>
              <svg width="9" height="9" viewBox="0 0 9 9" className="mr-[9px]">
                <path d="M1 1L8 8M8 1L1 8" stroke="#fff" strokeWidth="1.8" />
              </svg>
            </div>
            <div className="pr-[5px] pt-[6px]">
              <Caret c="#0072c6" />
            </div>
          </div>
          <div className="flex flex-1 min-h-0">
            <div className="flex-1 flex flex-col pl-[6px] pr-[5px] pt-[5px] min-w-0">
              <div className="flex items-end h-[26px] shrink-0">
                <Tab n="person" label="Contact" active w="w-[81px]" />
                <Tab n="person" label="Contact Information" w="w-[137px]" />
                <Tab n="person" label="Personal" w="w-[82px]" />
                <Tab n="bldg" label="Classification" w="w-[103px]" />
                <Tab n="comm" label="Communication Preferences" w="w-[174px]" />
                <Tab n="billing" label="Billing/Accounting" w="w-[124px]" />
                <Tab n="travel" label="Travel Information" w="w-[130px]" />
                <Tab n="share" label="Social Media" w="w-[99px]" />
                <Tab n="pinMap" label="Territory/Region" w="w-[120px]" />
                <Tab n="image" label="Image" w="w-[70px]" />
              </div>
              <div className="flex-1 border border-[#ababab] pl-[4px] pt-[5px] flex flex-col gap-[2px] overflow-hidden">
                {labels.map(([l, s], i) => (
                  <div key={l} className="flex items-center h-[20px] text-[#404040] shrink-0">
                    <div className="w-[67px] whitespace-nowrap shrink-0">
                      {l}
                      {s}
                    </div>
                    <div className="w-[518px] shrink-0 flex">{left[i]}</div>
                    {right[i] ? (
                      <>
                        <div className="w-[95px] ml-[3px] shrink-0">{["Greeting:", "Company:", "Position:"][i]}</div>
                        <div className="w-[452px] shrink-0 flex">{right[i]}</div>
                      </>
                    ) : null}
                  </div>
                ))}
              </div>
            </div>
            <Scroll className="w-[17px]" up="h-[17px]" thumb="h-[298px]" rest="h-[10px]" />
          </div>
        </div>
      </div>
      <div className="h-[24px] bg-[#0072c6] shrink-0" />
    </div>
  );
}

function Window2() {
  return (
    <div className="absolute left-[297px] top-[266px] w-[1213px] h-[568px] bg-white border border-r-0 border-b-0 border-[#0072c6] flex flex-col overflow-hidden">
      <div className="flex items-center h-[31px] shrink-0">
        <Qat
          ml="-ml-px"
          items={[
            <Ic n="factory" key="1" />,
            <Ic n="grayUp" key="2" />,
            <Ic n="grayDown" key="3" />,
            <Ic n="refresh" key="4" />,
            <Ic n="doc" key="5" />,
            <Ic n="clone" key="6" />,
            <Ic n="minus" key="7" />,
            <Ic n="clip" key="8" />,
            <Ic n="floppy" key="9" />,
            <Ic n="floppyX" key="10" />,
            <Ic n="undo" key="11" />,
            <svg key="12" width="7" height="6" viewBox="0 0 7 6">
              <path d="M0 0H7M0 2H7L3.5 6Z" fill="#555" stroke="#555" strokeWidth=".4" />
            </svg>,
          ]}
        />
        <div className="ml-[200px] text-[#666] whitespace-nowrap">GRM Corporation - Company</div>
        <Controls cls="pr-[4px]" />
      </div>
      <div className="flex h-[22px] shrink-0 border-b border-[#cfcfcf]">
        <div className="w-[68px] h-[22px] bg-[#0072c6] flex items-center justify-center shrink-0">
          <Logo w={24} onBlue />
        </div>
        <div className="w-[52px] h-[22px] bg-white border border-b-0 border-[#cfcfcf] text-[#0072c6] flex items-center justify-center">Home</div>
      </div>
      <Ribbon
        tree={
          <>
            <Group w="w-[73px]" label="Records...">
              <div className="flex flex-col items-center w-full gap-[14px] pt-[8px]">
                <Ic n="doc" s={16} />
                <Ic n="clone" s={16} />
              </div>
            </Group>
            <Group w="w-[220px]" label="Save">
              <Large w="w-[50px]" n="floppy" label="Save" off />
              <Large w="w-[52px]" n="floppyX" label={<Two a="Save and" b="Close" />} off />
              <Col className="ml-[11px]">
                <Small n="saveNew" label="Save and New" off />
                <Small n="saveClone" label="Save and Clone" off />
                <Small n="undo" label="Cancel" off />
              </Col>
            </Group>
            <Group w="w-[505px]" label="Edit">
              <Large w="w-[54px]" n="invoice" label={<Two a="Create" b="Invoice" />} />
              <Large w="w-[48px]" n="payment" label={<Two a="Create" b="Payment" />} />
              <Large w="w-[72px]" n="mail" label="Send Email" caret />
              <Large w="w-[50px]" n="note" label="Add Note" />
              <Large w="w-[66px]" n="task" label="Add Task" />
              <Large w="w-[52px]" n="user" label="User Fields" />
              <Col className="ml-[15px]">
                <Small n="check" label="Check Spelling" />
                <Small n="minus" label="Remove Account Details" />
                <Small n="image" label="Compress Image" />
              </Col>
            </Group>
            <Group w="w-[137px]" label="Open Related Record">
              <Large w="w-full" n="relatedGray" label={<Two a="Open Related" b="Record" />} off />
            </Group>
            <Group w="w-[86px]" label="View">
              <Col className="ml-[11px]">
                <Small n="refresh" label="Refresh" />
                <Small n="audit" label="Audit Log" />
                <Small n="clip" label="Reports" />
              </Col>
            </Group>
            <Group w="w-[45px]" label="R...">
              <Col className="w-full items-center">
                <Small n="bino" />
                <Small n="grayUp" />
                <Small n="grayDown" />
              </Col>
            </Group>
            <Group w="w-[60px]" label="Close">
              <Large w="w-full" n="closeBig" label="Close" />
            </Group>
            <div className="flex flex-col flex-1 items-start">
              <BrandLogo cls="mt-[29px] ml-[2px]" lw={24} text="text-[13px]" gap="gap-[3px]" />
              <div className="mt-[22px] ml-[66px]">
                <Chev d="u" s={10} />
              </div>
            </div>
          </>
        }
      />
      <div className="flex flex-1 min-h-0">
        <div className="w-[1189px] pl-[5px] pt-[5px] flex flex-col shrink-0 min-h-0">
          <div className="flex items-end h-[26px] shrink-0">
            <Tab n="factory" label="Company" active w="w-[87px]" />
            <Tab n="person" label="Contact Information" w="w-[138px]" />
            <Tab n="bldg" label="Classification" w="w-[103px]" />
            <Tab n="comm" label="Communication Preferences" w="w-[174px]" />
            <Tab n="billing" label="Billing/Accounting" w="w-[124px]" />
            <Tab n="share" label="Social Media" w="w-[99px]" />
            <Tab n="image" label="Image" w="w-[71px]" />
          </div>
          <div className="h-[200px] border border-[#ababab] pl-[4px] pr-[5px] pt-[5px] flex flex-col gap-[2px] shrink-0 text-[#404040]">
            {[
              ["Name:*", <Field key="1" v="GRM Corporation" sel />],
              ["Parent Company:", <Field key="2" combo />],
              ["Default Contact:", <Field key="3" v="Wright, Charles H" bg="bg-[#f9f9d2]" combo />],
              ["Account Manager:", <Field key="4" v="Julliard, Howard R" bg="bg-[#e8fbdc]" combo />],
              ["Relationship Type:", <Field key="5" v="Client, Exhibitor" drop />],
              ["Web Site:", <Field key="6" v="www.grmc.example.com" link />],
              ["Membership #:", <Field key="7" v="767497239" />],
            ].map(([l, f]) => (
              <div key={l as string} className="flex items-center h-[20px] shrink-0">
                <div className="w-[95px] whitespace-nowrap shrink-0">{l}</div>
                {f}
              </div>
            ))}
            <div className="flex items-center h-[20px] shrink-0">
              <div className="w-[96px]">Inactive</div>
              <div className="w-[13px] h-[13px] border border-[#ababab] bg-white" />
            </div>
          </div>
          <div className="flex items-end h-[26px] mt-[2px] shrink-0">
            <Tab n="person" label="Company Contacts" active w="w-[133px]" />
            <Tab n="bubble" label="Communications" w="w-[118px]" />
            <Tab n="task" label="Tasks" w="w-[69px]" />
            <Tab n="cart" label="Sales" w="w-[66px]" />
            <Tab n="pushpin" label="Events" w="w-[74px]" />
            <Tab n="calc" label="Finance" w="w-[78px]" />
            <Tab n="box" label="Products" w="w-[82px]" />
            <Tab n="noteTan" label="Notes" w="w-[70px]" red />
            <Tab n="docClip" label="Documents" w="w-[94px]" />
          </div>
          <div className="flex-1 min-h-0 border-x border-t border-[#ababab] flex flex-col overflow-hidden">
            <div className="h-[28px] flex items-center shrink-0 text-[#404040]">
              <TB w="w-[26px] ml-[2px]" n="doc" />
              <TB w="w-[26px]" n="clone" />
              <Sep c="mx-[3px]" />
              <TB w="w-[26px]" n="addDoc" />
              <TB w="w-[26px]" n="remDoc" />
              <Sep c="mx-[3px]" />
              <TB w="w-[34px]" n="mail" caret />
              <TB w="w-[26px]" n="note" />
              <TB w="w-[26px]" n="x" />
              <Sep c="mx-[3px]" />
              <TB w="w-[26px]" n="related" />
              <Sep c="mx-[3px]" />
              <TB w="w-[34px]" n="gridSel" caret />
              <TB w="w-[26px] ml-[2px]" n="windows" />
              <TB w="w-[25px]" n="audit" />
              <TB w="w-[26px]" n="layout" />
              <Sep c="mx-[3px]" />
              <TB w="w-[26px]" n="grayUp" />
              <TB w="w-[26px]" n="greenDown" />
              <Sep c="ml-[4px] mr-[6px]" />
              <div className="w-[150px] h-[20px] border border-[#ababab] flex items-center shrink-0 pl-[6px] gap-[3px]">
                <Ic n="funnel" s={16} />
                <span className="flex-1">Active</span>
                <div className="w-[15px] h-full bg-[#f0f0f0] border-l border-[#d0d0d0] flex items-center justify-center">
                  <Chev d="d" s={9} c="#555" />
                </div>
              </div>
              <TB w="w-[34px] ml-[10px]" n="funnel" caret />
              <Sep c="ml-[3px] mr-[7px]" />
              <div className="w-[150px] h-[20px] border border-[#ababab] flex items-center shrink-0 pl-[4px] text-[#a3a3a3]">
                <span className="flex-1">Text to search...</span>
                <div className="w-[17px] h-full bg-[#f0f0f0] border-l border-[#d0d0d0] flex items-center justify-center">
                  <Ic n="glass" s={13} />
                </div>
              </div>
              <Sep c="ml-[11px] mr-[3px]" />
              <TB w="w-[42px]" n="saveLayout" caret />
              <Sep c="ml-[4px] mr-[3px]" />
              <TB w="w-[26px]" n="docSearch" />
            </div>
            <div className="flex h-[19px] shrink-0 border-b-2 border-[#ababab] text-[#404040]">
              <div className={clsx(gridCols[0], "border-r border-[#c8c8c8] shrink-0")} />
              {["Contact", "Formatted Full Name", "Position", "Primary Phone", "Primary Email", "Inactive"].map((h, i) => (
                <div key={h} className={clsx(gridCols[i + 1], "px-[4px] flex items-center border-r border-[#c8c8c8] shrink-0 last:border-r-0", i === 0 && "justify-between")}>
                  <span>{h}</span>
                  {i === 0 && (
                    <svg width="9" height="5" viewBox="0 0 9 5" className="mr-[6px]">
                      <path d="M0 5L4.5 0L9 5Z" fill="#666" />
                    </svg>
                  )}
                </div>
              ))}
            </div>
            {people.map((r, i) => (
              <div key={r.c} className={clsx("flex h-[21px] shrink-0 border-b border-[#d4d4d4] text-[#404040]", r.bg)}>
                <div className={clsx(gridCols[0], "bg-white border-r border-[#c8c8c8] shrink-0 flex items-center justify-center")}>
                  {i === 0 && (
                    <svg width="6" height="8" viewBox="0 0 6 8">
                      <path d="M1 0L5 4L1 8Z" fill="#666" />
                    </svg>
                  )}
                </div>
                <div className={clsx(gridCols[1], "px-[4px] flex items-center border-r border-[#d4d4d4] shrink-0", i === 0 && "bg-white")}>{r.c}</div>
                <div className={clsx(gridCols[2], "px-[4px] flex items-center border-r border-[#d4d4d4] shrink-0", i === 3 && "bg-[#fdeef2] text-[#111]")}>{r.f}</div>
                <div className={clsx(gridCols[3], "px-[4px] flex items-center border-r border-[#d4d4d4] shrink-0")}>{r.p}</div>
                <div className={clsx(gridCols[4], "px-[4px] flex items-center border-r border-[#d4d4d4] shrink-0")}>{r.ph}</div>
                <div className={clsx(gridCols[5], "px-[4px] flex items-center border-r border-[#d4d4d4] shrink-0 underline", i === 0 ? "text-[#333]" : "text-[#0072c6]")}>{r.e}</div>
                <div className="flex-1 flex items-center justify-center">
                  <div className="w-[13px] h-[13px] border border-[#ababab] bg-white" />
                </div>
              </div>
            ))}
          </div>
        </div>
        <Scroll className="w-[18px] ml-[5px]" up="h-[15px]" thumb="h-[264px]" rest="h-[118px]" down />
      </div>
      <div className="h-[24px] bg-[#0072c6] shrink-0 flex items-end justify-end">
        <svg width="10" height="10" viewBox="0 0 10 10" className="mb-[2px] mr-[2px]">
          <path d="M7 1h2v2H7zM4 4h2v2H4zM7 4h2v2H7zM1 7h2v2H1zM4 7h2v2H4zM7 7h2v2H7z" fill="#7fb5e0" />
        </svg>
      </div>
    </div>
  );
}

export default function App() {
  return (
    <div className="relative w-[1510px] h-[834px] overflow-hidden bg-white text-[11px] tracking-[-0.35px] font-['Noto_Sans',sans-serif]">
      <Defs />
      <Window1 />
      <svg width="120" height="110" viewBox="1360 140 120 110" className="absolute left-[1360px] top-[140px]">
        <path d="M1467 144L1471 149L1392 226L1397 230L1370 243L1382 215L1386 219Z" fill="#ff0000" />
      </svg>
      <Window2 />
    </div>
  );
}
